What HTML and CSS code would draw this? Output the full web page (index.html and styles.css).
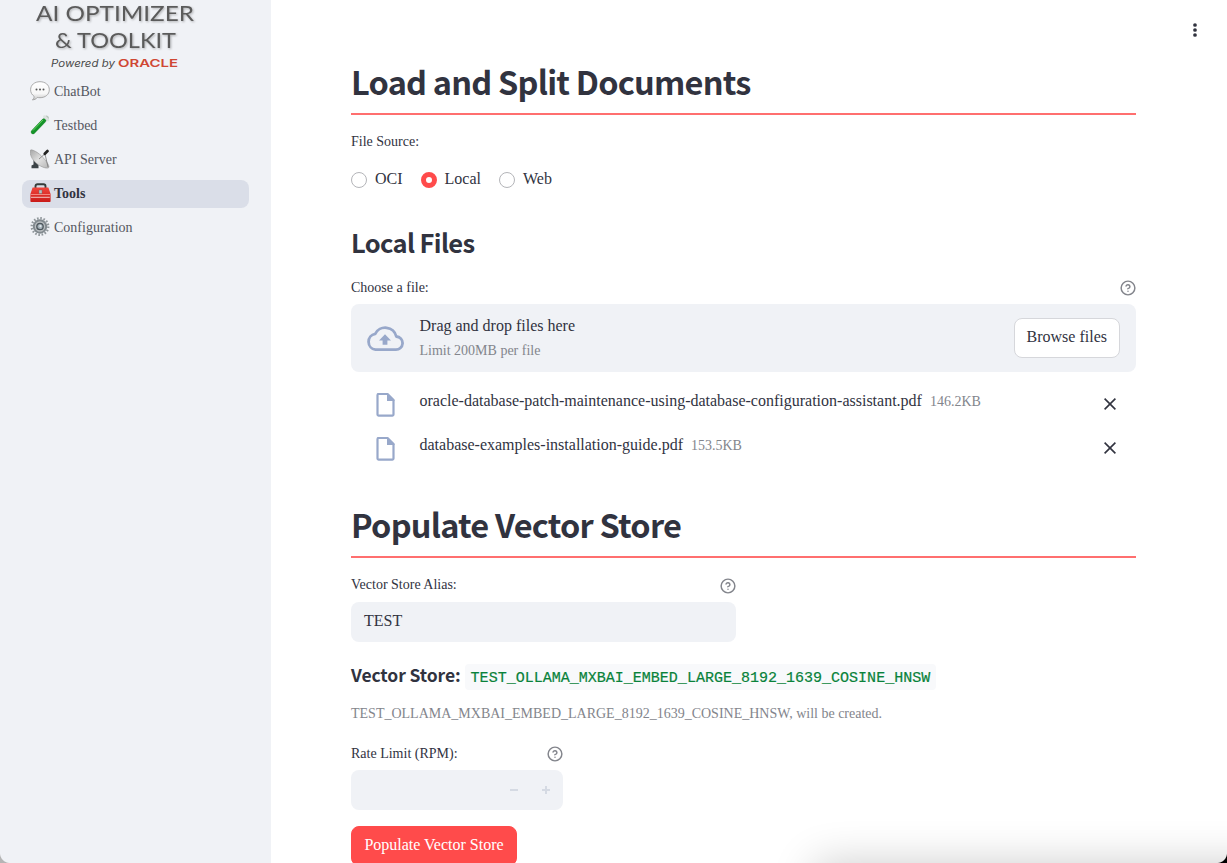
FILE: index.html
```html
<!DOCTYPE html>
<html lang="en">
<head>
<meta charset="utf-8">
<title>AI Optimizer &amp; Toolkit</title>
<link rel="stylesheet" href="styles.css">
</head>
<body>
<svg class="defs" width="0" height="0" aria-hidden="true">
  <defs>
    <symbol id="help" viewBox="0 0 24 24"><g fill="none" stroke="currentColor" stroke-width="2.200" stroke-linecap="round" stroke-linejoin="round"><circle cx="12" cy="12" r="10.300"/><path d="M9.100 9a3 3 0 0 1 5.800 1c0 2-3 3-3 3"/><path d="M12 17h.01"/></g></symbol>
    <symbol id="file" viewBox="0 0 20 26"><path fill="none" stroke="currentColor" stroke-width="2.200" stroke-linejoin="round" d="M2.400 2H12l6 6v14.600a1 1 0 0 1-1 1H3a1 1 0 0 1-1-1V3a1 1 0 0 1 1-1z"/><path fill="currentColor" d="M11.500 1.500h1L19 8v1h-7.500z"/></symbol>
    <symbol id="close" viewBox="0 0 12 12"><path fill="none" stroke="currentColor" stroke-width="1.600" d="M.6.6l10.800 10.800M11.400.6L.6 11.400"/></symbol>
    <linearGradient id="bubble" x1="0" y1="0" x2="0" y2="1"><stop offset="0" stop-color="#fff"/><stop offset=".65" stop-color="#f7f7f7"/><stop offset="1" stop-color="#c9c9c9"/></linearGradient>
    <linearGradient id="dish" x1="0" y1="0" x2="1" y2="1"><stop offset="0" stop-color="#a5a5a5"/><stop offset=".5" stop-color="#e2e2e2"/><stop offset="1" stop-color="#b5b5b5"/></linearGradient>
    <linearGradient id="box" x1="0" y1="0" x2="0" y2="1"><stop offset="0" stop-color="#f0443b"/><stop offset="1" stop-color="#c91b19"/></linearGradient>
  </defs>
</svg>
<div class="app">
  <aside class="sidebar">
    <svg class="logo" viewBox="0 0 170 74" width="170" height="74">
      <g class="logo-title">
        <text x="5" y="20.500" textLength="158" lengthAdjust="spacingAndGlyphs">AI OPTIMIZER</text>
        <text x="24" y="48" textLength="121" lengthAdjust="spacingAndGlyphs">&amp; TOOLKIT</text>
      </g>
      <text class="logo-by" x="20" y="67" textLength="64" lengthAdjust="spacingAndGlyphs">Powered by</text>
      <text class="logo-brand" x="87" y="67" textLength="60" lengthAdjust="spacingAndGlyphs">ORACLE</text>
    </svg>
    <nav class="nav">
      <a class="nav-item"><svg class="emoji" viewBox="0 0 21 20"><path fill="url(#bubble)" stroke="#999" stroke-width=".8" d="M10 .7c5.300 0 9.300 3.200 9.300 8s-4 8-9.300 8c-1 0-1.800-.1-2.600-.3-1.200 1.500-3 2.500-5 2.400 1.300-.9 1.800-2 1.700-3.500C1.900 13.800.6 11.500.6 8.700c0-4.800 4-8 9.400-8z"/><g fill="#555"><circle cx="6.500" cy="8.500" r="1"/><circle cx="10" cy="8.500" r="1"/><circle cx="13.500" cy="8.500" r="1"/></g></svg><span>ChatBot</span></a>
      <a class="nav-item"><svg class="emoji" viewBox="0 0 21 20"><path stroke="#b9c4bd" stroke-width="4.600" stroke-linecap="round" d="M3 17L16.500 3"/><path stroke="#16932a" stroke-width="4" stroke-linecap="round" d="M3 17L14 5.500"/><path stroke="#5fd35d" stroke-width="1" d="M3 15.500L13 5"/><path stroke="#dce3df" stroke-width="2.500" stroke-linecap="round" d="M14.500 1.500l3.600 3.600"/></svg><span>Testbed</span></a>
      <a class="nav-item"><svg class="emoji" viewBox="0 0 21 20"><path fill="#3c4347" d="M3.500 11l5 5v3.200h-7v-2.600l2-1z"/><path fill="url(#dish)" stroke="#888" stroke-width=".5" d="M.6 1C2 .2 8 3 13 8.500s7 9.500 5.400 10.300C16.500 20 9.500 17.500 5 13S-.6 3 .6 1z"/><path stroke="#777" stroke-width=".8" d="M9 10l8-7M18 18L15 5"/><path stroke="#222" stroke-width="2.800" stroke-linecap="round" d="M14.800 4.700l2.700-2.600"/></svg><span>API Server</span></a>
      <a class="nav-item active"><svg class="emoji" viewBox="0 0 21 20"><path fill="none" stroke="#343c3a" stroke-width="1.900" d="M5.500 6V3.200Q5.500 1.300 7.500 1.300h6q2 0 2 1.900V6"/><path fill="url(#box)" d="M2.600 4.600h15.800l2.200 6.500v7.200q0 .7-.8.700H1.200q-.8 0-.8-.7v-7.200z"/><path stroke="#fa9f99" stroke-width=".8" d="M.6 11.500h19.600"/><path stroke="#f4d7d4" stroke-width=".9" d="M1 14.300h18.800"/><path fill="#b9bfbd" stroke="#666" stroke-width=".4" d="M9 7h3v3.500H9z"/></svg><span>Tools</span></a>
      <a class="nav-item"><svg class="emoji" viewBox="0 0 21 20"><circle cx="10" cy="9.500" r="8.300" fill="none" stroke="#8f969a" stroke-width="2.300" stroke-dasharray="1.600 1.660"/><circle cx="10" cy="9.500" r="6.200" fill="#b9bec1" stroke="#81898e" stroke-width="2"/><circle cx="10" cy="9.500" r="3.200" fill="#a5b1b8" stroke="#4c565c" stroke-width="1.300"/><circle cx="10.400" cy="9.200" r="1.100" fill="#dfe8ec"/></svg><span>Configuration</span></a>
    </nav>
  </aside>
  <main class="main">
    <svg class="menu" viewBox="0 0 4 14" width="4" height="14"><g fill="#31333f"><circle cx="2" cy="2" r="1.850"/><circle cx="2" cy="7" r="1.850"/><circle cx="2" cy="12" r="1.850"/></g></svg>
    <h1>Load and Split Documents</h1>
    <div class="label"><span>File Source:</span></div>
    <div class="radios">
      <label class="radio"><span class="dot"></span>OCI</label>
      <label class="radio"><span class="dot on"></span>Local</label>
      <label class="radio"><span class="dot"></span>Web</label>
    </div>
    <h2>Local Files</h2>
    <div class="label choose"><span>Choose a file:</span><svg class="help"><use href="#help"/></svg></div>
    <section class="dropzone">
      <svg class="cloud" viewBox="0 0 38 26" width="38" height="26"><path fill="none" stroke="#98a8ca" stroke-width="2.800" stroke-linejoin="round" d="M9.500 23.700h20.100a6.600 6.600 0 0 0 .7-13.200A11.300 11.300 0 0 0 9.200 7.900 8 8 0 0 0 9.500 23.700z"/><path fill="#98a8ca" d="M19 8.200l6 6.200h-3.600v4.400h-4.800v-4.400H13z"/></svg>
      <div class="drop-text"><div>Drag and drop files here</div><small>Limit 200MB per file</small></div>
      <button class="btn">Browse files</button>
    </section>
    <ul class="files">
      <li><svg class="file"><use href="#file"/></svg><span class="name">oracle-database-patch-maintenance-using-database-configuration-assistant.pdf</span><small>146.2KB</small><svg class="close"><use href="#close"/></svg></li>
      <li><svg class="file"><use href="#file"/></svg><span class="name">database-examples-installation-guide.pdf</span><small>153.5KB</small><svg class="close"><use href="#close"/></svg></li>
    </ul>
    <h1 class="second">Populate Vector Store</h1>
    <div class="alias">
      <div class="label"><span>Vector Store Alias:</span><svg class="help"><use href="#help"/></svg></div>
      <div class="input">TEST</div>
    </div>
    <h3><span class="h3-text">Vector Store:</span><code>TEST_OLLAMA_MXBAI_EMBED_LARGE_8192_1639_COSINE_HNSW</code></h3>
    <p class="caption">TEST_OLLAMA_MXBAI_EMBED_LARGE_8192_1639_COSINE_HNSW, will be created.</p>
    <div class="rate">
      <div class="label"><span>Rate Limit (RPM):</span><svg class="help"><use href="#help"/></svg></div>
      <div class="input stepper">
        <svg viewBox="0 0 8 8" width="8" height="8"><path d="M0 4h8"/></svg>
        <svg viewBox="0 0 8 8" width="8" height="8"><path d="M0 4h8M4 0v8"/></svg>
      </div>
    </div>
    <button class="btn primary">Populate Vector Store</button>
  </main>
  <div class="window-shadow"></div>
  <div class="corner left"></div>
  <div class="corner right"></div>
</div>
</body>
</html>
```
FILE: styles.css
```css
* { box-sizing: border-box; }
body {
  margin: 0;
  background: #fff;
  color: #31333f;
  font: 16px/24px "Liberation Serif", serif;
}
.defs { position: absolute; }
.app {
  position: relative;
  display: flex;
  height: 863px;
  overflow: hidden;
}
.sidebar {
  flex: none;
  width: 271px;
  background: #f0f2f6;
}
.logo {
  display: block;
  margin-left: 31px;
  overflow: visible;
}
.logo-title {
  font: 400 21.2px Lato, sans-serif;
  fill: #5b5b5b;
  filter: drop-shadow(1px 1.5px 1px rgba(0, 0, 0, .28));
}
.logo-by { font: italic 400 10.5px Inter, sans-serif; fill: #4a4a4a; }
.logo-brand { font: 600 10.5px Inter, sans-serif; fill: #cf4733; }
.nav {
  display: grid;
  gap: 6px;
  padding: 4px 22px 0;
}
.nav-item {
  display: flex;
  align-items: center;
  height: 28px;
  padding-left: 8px;
  border-radius: 8px;
  color: #555761;
  font-size: 14px;
  line-height: 28px;
}
.nav-item.active {
  background: #dadee8;
  color: #31333f;
  font-weight: 700;
}
.emoji {
  width: 21px;
  height: 20px;
  margin: -2px 3px 0 0;
}
.main {
  position: relative;
  flex: 1;
  padding: 60px 91px 0 80px;
}
.menu {
  position: absolute;
  top: 23px;
  right: 30px;
}
h1, h2, h3 {
  margin: 0;
  font-family: "Noto Sans CJK SC", sans-serif;
  font-weight: 700;
}
h1 {
  height: 55px;
  border-bottom: 2px solid #ff6f6f;
  font-size: 32.5px;
  letter-spacing: -.78px;
  line-height: 42px;
}
h1.second { margin-top: 33px; }
h1 + .label { margin-top: 17px; }
.label {
  display: flex;
  justify-content: space-between;
  align-items: center;
  height: 20px;
  font-size: 14px;
  line-height: 20px;
}
.help {
  width: 16px;
  height: 16px;
  color: #83858c;
}
.radios {
  display: flex;
  gap: 18px;
  margin-top: 15px;
}
.radio { display: flex; gap: 8px; }
.dot {
  width: 16px;
  height: 16px;
  margin-top: 5px;
  border: 1px solid #b4b5b9;
  border-radius: 50%;
}
.dot.on { border: 5px solid #ff4b4b; }
h2 {
  margin: 35px 0 20px;
  font-size: 25.5px;
  letter-spacing: -.64px;
  line-height: 32px;
}
.dropzone {
  display: flex;
  align-items: center;
  height: 68px;
  margin-top: 6px;
  padding: 0 16px 0 15px;
  border-radius: 8px;
  background: #f0f2f6;
}
.cloud { margin: 1px 15.5px 0 0; }
.drop-text { flex: 1; }
small {
  display: block;
  color: #83858c;
  font-size: 14px;
}
.drop-text small { margin: 1px 0 -1px; }
.btn {
  height: 40px;
  padding: 0 12px 3px;
  border: 1px solid #d6d7db;
  border-radius: 8px;
  background: #fff;
  color: inherit;
  font: inherit;
}
.files {
  margin: 10px 0 0;
  padding: 0 20px 0 24px;
  list-style: none;
}
.files li {
  display: flex;
  align-items: center;
  height: 44px;
}
.file {
  width: 21px;
  height: 26px;
  margin: 1px 23.5px 0 0;
  color: #98a8ca;
}
.name { margin-top: -6px; }
.files small { margin: -4px 0 0 8px; }
.close {
  width: 12px;
  height: 12px;
  margin-left: auto;
}
.alias { width: 385px; margin-top: 18px; }
.alias .label span { margin-top: -2px; }
.input {
  height: 40px;
  margin-top: 6px;
  padding: 7px 13px;
  border-radius: 8px;
  background: #f0f2f6;
}
h3 {
  display: flex;
  gap: 4px;
  height: 26px;
  margin-top: 22px;
  font-size: 17.5px;
  letter-spacing: -.1px;
  line-height: 22px;
}
code {
  height: 26px;
  padding: 0 6px;
  border-radius: 4px;
  background: #f8f9fb;
  color: #09823a;
  font: 15px/29px "Liberation Mono", monospace;
  letter-spacing: .01px;
  -webkit-text-stroke: .2px #09823a;
}
.caption {
  margin: 14px 0 20px;
  color: #83858c;
  font-size: 14px;
  line-height: 20px;
}
.rate { width: 212px; }
.stepper {
  display: flex;
  justify-content: flex-end;
  align-items: center;
  gap: 24px;
}
.stepper path { stroke: #d5dae3; stroke-width: 2; }
.primary {
  display: block;
  width: 166px;
  margin-top: 16px;
  border-color: #ff4b4b;
  background: #ff4b4b;
  color: #fff;
}
.window-shadow {
  position: absolute;
  top: 873px;
  left: 825px;
  width: 500px;
  height: 80px;
  box-shadow: 0 0 44px 10px rgba(0, 0, 0, .2);
}
.corner {
  position: absolute;
  bottom: 0;
  width: 10px;
  height: 10px;
}
.corner.left {
  left: 0;
  background: radial-gradient(circle at 100% 0, transparent 9.5px, #b5b5b5 10.5px);
}
.corner.right {
  right: 0;
  background: radial-gradient(circle at 0 0, transparent 9.5px, #000 10.5px);
}
```
